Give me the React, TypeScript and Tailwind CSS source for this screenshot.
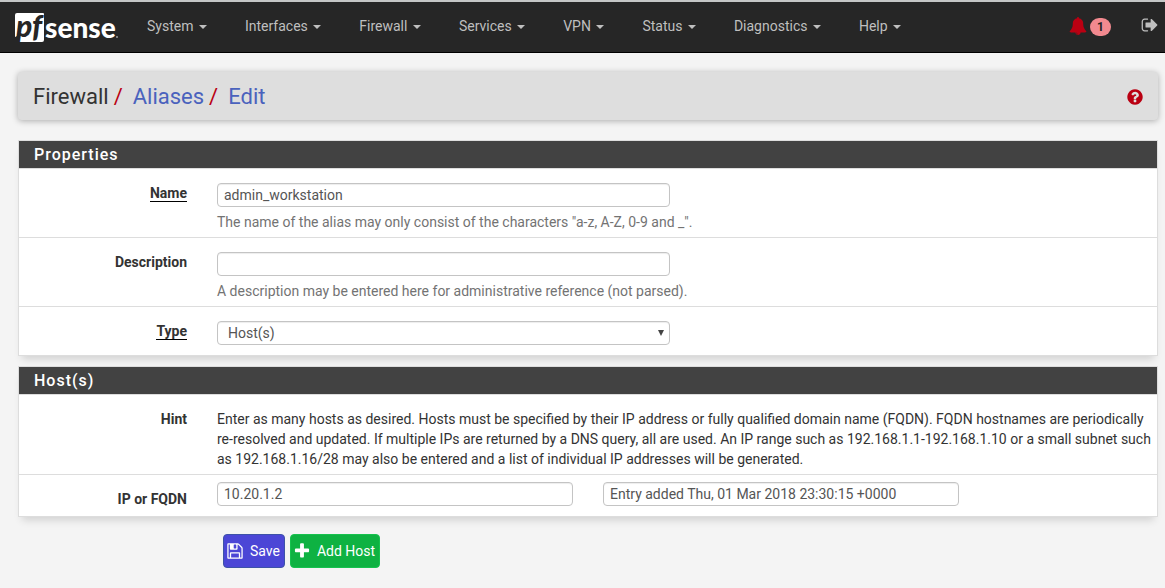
import type { ReactNode } from 'react';

const ICONS = {
  save: 'M512 1536h768v-384h-768v384zm896 0h128v-896q0-14-10-38.5t-20-34.5l-281-281q-10-10-34-20t-39-10v416q0 40-28 68t-68 28h-576q-40 0-68-28t-28-68v-416h-128v1280h128v-416q0-40 28-68t68-28h832q40 0 68 28t28 68v416zm-384-928v-320q0-13-9.5-22.5t-22.5-9.5h-192q-13 0-22.5 9.5t-9.5 22.5v320q0 13 9.5 22.5t22.5 9.5h192q13 0 22.5-9.5t9.5-22.5zm640 32v928q0 40-28 68t-68 28h-1344q-40 0-68-28t-28-68v-1344q0-40 28-68t68-28h928q40 0 88 20t76 48l280 280q28 28 48 76t20 88z',
  plus: 'M1600 736v192q0 40-28 68t-68 28h-416v416q0 40-28 68t-68 28h-192q-40 0-68-28t-28-68v-416h-416q-40 0-68-28t-28-68v-192q0-40 28-68t68-28h416v-416q0-40 28-68t68-28h192q40 0 68 28t28 68v416h416q40 0 68 28t28 68z',
  help: 'M1024 1376v-192q0-14-9-23t-23-9h-192q-14 0-23 9t-9 23v192q0 14 9 23t23 9h192q14 0 23-9t9-23zm256-672q0-88-55.5-163t-138.5-116-170-41q-243 0-371 213-15 24 8 42l132 100q7 6 19 6 16 0 25-12 53-68 86-92 34-24 86-24 48 0 85.5 26t37.5 59q0 38-20 61t-68 45q-63 28-115.5 86.5t-52.5 125.5v36q0 14 9 23t23 9h192q14 0 23-9t9-23q0-19 21.5-49.5t54.5-49.5q32-18 49-28.5t46-35 44.5-48 28-60.5 12.5-81zm384 192q0 209-103 385.5t-279.5 279.5-385.5 103-385.5-103-279.5-279.5-103-385.5 103-385.5 279.5-279.5 385.5-103 385.5 103 279.5 279.5 103 385.5z',
  signOut: 'M704 1440q0 4 1 20t.5 26.5-3 23.5-10 19.5-20.5 6.5h-320q-119 0-203.5-84.5t-84.5-203.5v-704q0-119 84.5-203.5t203.5-84.5h320q13 0 22.5 9.5t9.5 22.5q0 4 1 20t.5 26.5-3 23.5-10 19.5-20.5 6.5h-320q-66 0-113 47t-47 113v704q0 66 47 113t113 47h312l11.5 1 11.5 3 8 5.5 7 9 2 13.5zm928-544q0 26-19 45l-544 544q-19 19-45 19t-45-19-19-45v-288h-448q-26 0-45-19t-19-45v-384q0-26 19-45t45-19h448v-288q0-26 19-45t45-19 45 19l544 544q19 19 19 45z',
  bell: 'M912 1696q0-16-16-16-59 0-101.5-42.5t-42.5-101.5q0-16-16-16t-16 16q0 73 51.5 124.5t124.5 51.5q16 0 16-16zm816-288q0 52-38 90t-90 38h-448q0 106-75 181t-181 75-181-75-75-181h-448q-52 0-90-38t-38-90q50-42 91-88t85-119.5 74.5-158.5 50-206 19.5-260q0-152 117-282.5t307-158.5q-8-19-8-39 0-40 28-68t68-28 68 28 28 68q0 20-8 39 190 28 307 158.5t117 282.5q0 139 19.5 260t50 206 74.5 158.5 85 119.5 91 88z',
};

function Icon({ name, className }: { name: keyof typeof ICONS; className: string }) {
  return (
    <svg viewBox="0 0 1792 1792" fill="currentColor" aria-hidden="true" className={className}>
      <path d={ICONS[name]} />
    </svg>
  );
}

function Logo() {
  return (
    <svg width="112" height="48" viewBox="-4 -8 112 48" role="img" aria-label="pfsense" className="shrink-0">
      <path d="M2 1H28Q29 1 29 2V28Q29 30 27 30H3.500L4.500 23L0 25V3Q0 1 2 1Z" fill="#fff" />
      <g fontFamily="Lato, sans-serif" fontWeight="900">
        <text x="1" y="25" fontSize="30" fontStyle="italic" fill="#262626">pf</text>
        <text x="30" y="26" fontSize="28" fill="#fff">sense</text>
      </g>
      <circle cx="102" cy="25" r="1" fill="#999" />
    </svg>
  );
}

const MENU = ['System', 'Interfaces', 'Firewall', 'Services', 'VPN', 'Status', 'Diagnostics', 'Help'];

function NavBar() {
  return (
    <nav className="flex h-[53px] items-center border-t-2 border-b border-t-[#c4c6c6] border-b-black bg-[#262626] pr-1.5 pb-0.5 pl-[11px] text-[#bfbfbf]">
      <a href="#home" className="mt-1"><Logo /></a>
      <ul className="ml-[5px] flex grow">
        {MENU.map((item) => (
          <li key={item}>
            <a href={`#${item.toLowerCase()}`} className="block px-[19px] leading-5">
              {item}{' '}
              <span className="ml-0.5 inline-block border-x-4 border-t-4 border-x-transparent border-t-current align-middle" />
            </a>
          </li>
        ))}
      </ul>
      <a href="#notices" aria-label="Notices" className="mr-[30px] flex items-center gap-[3px]">
        <Icon name="bell" className="size-[18px] text-[#ba0012]" />
        <span className="mt-0.5 rounded-full bg-[#f2898f] px-[7px] text-xs leading-[18px] font-bold text-[#212121]">1</span>
      </a>
      <a href="#logout" aria-label="Logout" className="-mt-0.5"><Icon name="signOut" className="size-[18px]" /></a>
    </nav>
  );
}

function Panel({ title, children }: { title: string; children: ReactNode }) {
  return (
    <section className="mb-2.5 border border-[#ddd] bg-white shadow-[0_7px_8px_-4px_rgba(0,0,0,0.15)]">
      <h2 className="border-b border-[#ddd] bg-[#424242] px-[15px] text-base leading-[27px] font-medium tracking-[1px] text-white">{title}</h2>
      <div className="divide-y divide-[#ddd]">{children}</div>
    </section>
  );
}

const ROW = '-mx-2.5 grid grid-cols-12';
const LABEL = 'col-span-2 px-[15px] pt-3.5 text-right leading-5 font-bold';
const FIELD = 'block h-6 w-full rounded border border-[#c4c4c4] bg-white px-1.5 leading-5 text-[#555] shadow-[inset_0_1px_1px_rgba(0,0,0,0.075)]';

function Label({ id, text, required }: { id: string; text: string; required?: boolean }) {
  return (
    <label htmlFor={id} className={LABEL}>
      <span className={required ? 'inline-block border-b border-black leading-[15px]' : ''}>{text}</span>
    </label>
  );
}

function TextRow({ id, label, value, hint, required }: { id: string; label: string; value: string; hint: string; required?: boolean }) {
  return (
    <div className="overflow-hidden">
      <div className={ROW}>
        <Label id={id} text={label} required={required} />
        <div className="col-span-10 pt-3.5 pb-[5px]">
          <div className="grid grid-cols-10">
            <div className="col-span-5 px-[15px]">
              <input id={id} type="text" defaultValue={value} className={FIELD} />
            </div>
          </div>
          <p className="mt-[5px] px-[15px] leading-5 text-[#737373]">{hint}</p>
        </div>
      </div>
    </div>
  );
}

export default function App() {
  return (
    <div className="min-h-screen bg-[#f4f4f4] font-['Roboto',sans-serif] text-sm text-[#333]">
      <NavBar />
      <main className="pt-[19px] pr-[7px] pb-5 pl-[18px]">
        <header className="mb-5 flex h-12 items-center justify-between rounded bg-[#dedede] pt-0.5 pr-3.5 pl-[15px] shadow-[0_1px_6px_rgba(0,0,0,0.3)]">
          <h1 className="flex text-[22px] leading-6">
            <span>Firewall</span>
            <span className="mr-2.5 ml-[5px] text-[#ba0012]">/</span>
            <a href="#aliases" className="text-[#4a62bd]">Aliases</a>
            <span className="mr-2.5 ml-[5px] text-[#ba0012]">/</span>
            <a href="#edit" className="text-[#4a62bd]">Edit</a>
          </h1>
          <a href="#help" aria-label="Help" className="text-[#ba0012]"><Icon name="help" className="size-[18px]" /></a>
        </header>

        <form>
          <Panel title="Properties">
            <TextRow id="name" label="Name" required value="admin_workstation" hint={'The name of the alias may only consist of the characters "a-z, A-Z, 0-9 and _".'} />
            <TextRow id="descr" label="Description" value="" hint="A description may be entered here for administrative reference (not parsed)." />
            <div className="overflow-hidden">
              <div className={ROW}>
                <Label id="type" text="Type" required />
                <div className="col-span-5 px-[15px] pt-3.5 pb-2.5">
                  <div className="relative">
                    <select id="type" className={`${FIELD} appearance-none pl-2.5`}>
                      <option>Host(s)</option>
                    </select>
                    <svg viewBox="0 0 6 6" aria-hidden="true" className="pointer-events-none absolute top-[9px] right-1.5 size-1.5 fill-[#444]">
                      <path d="M0 0H6L3 6Z" />
                    </svg>
                  </div>
                </div>
              </div>
            </div>
          </Panel>

          <Panel title="Host(s)">
            <div className="overflow-hidden">
              <div className={ROW}>
                <div className={LABEL}>Hint</div>
                <p className="col-span-10 px-[15px] pt-3.5 pb-[5px] leading-5">
                  Enter as many hosts as desired. Hosts must be specified by their IP address or fully qualified domain name (FQDN). FQDN hostnames are periodically re-resolved and updated. If multiple IPs are returned by a DNS query, all are used. An IP range such as 192.168.1.1-192.168.1.10 or a small subnet such as 192.168.1.16/28 may also be entered and a list of individual IP addresses will be generated.
                </p>
              </div>
            </div>
            <div className="overflow-hidden">
              <div className={ROW}>
                <Label id="address" text="IP or FQDN" />
                <div className="col-span-4 px-[15px] pt-[7px] pb-2.5">
                  <input id="address" type="text" defaultValue="10.20.1.2" className={FIELD} />
                </div>
                <div className="col-span-4 px-[15px] pt-[7px] pb-2.5">
                  <input type="text" aria-label="Entry description" defaultValue="Entry added Thu, 01 Mar 2018 23:30:15 +0000" className={FIELD} />
                </div>
              </div>
            </div>
          </Panel>

          <div className="mt-[17px] ml-[205px] flex gap-[5px]">
            <button type="submit" className="flex h-[34px] items-center gap-1.5 rounded border border-[#3d52a8] bg-[#4b46d6] pr-1 pl-0.5 text-white">
              <Icon name="save" className="size-[18px]" />Save
            </button>
            <button type="button" className="flex h-[34px] items-center gap-1.5 rounded border border-[#16c24e] bg-[#0eb242] pr-1 pl-0.5 text-white">
              <Icon name="plus" className="size-[18px]" />Add Host
            </button>
          </div>
        </form>
      </main>
    </div>
  );
}
